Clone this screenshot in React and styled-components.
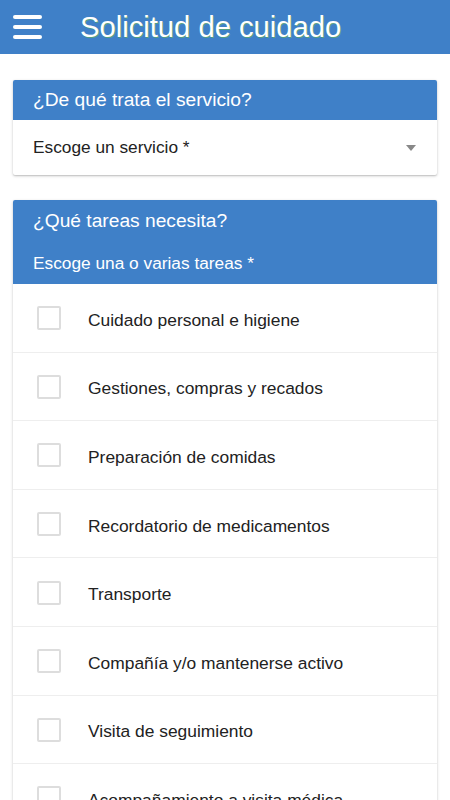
import React from "react";
import styled, { createGlobalStyle } from "styled-components";

const Global = createGlobalStyle`
  html, body { margin: 0; padding: 0; background: #fff; }
  body { font-family: "Liberation Sans", Arial, Helvetica, sans-serif; }
  * { box-sizing: border-box; }
`;

const Page = styled.div`
  width: 450px;
  min-height: 800px;
  background: #fff;
`;

const TopBar = styled.header`
  height: 54px;
  background: #3f80c8;
  display: flex;
  align-items: center;
  padding-left: 13px;
`;

const MenuButton = styled.div`
  width: 29px;
  display: flex;
  flex-direction: column;
  gap: 6px;
`;

const MenuLine = styled.span`
  display: block;
  height: 4px;
  border-radius: 2px;
  background: #fff;
`;

const Title = styled.h1`
  margin: 0 0 0 38px;
  color: #fff;
  font-size: 29.2px;
  font-weight: 400;
  text-shadow: 1px 1px 0 rgba(90, 170, 110, 0.8);
`;

const Content = styled.main`
  padding: 26px 13px 0;
  display: flex;
  flex-direction: column;
  gap: 25px;
`;

const Card = styled.section`
  background: #fff;
  border-radius: 2px;
  box-shadow: 0 1px 3px rgba(0, 0, 0, 0.22), 0 1px 1px rgba(0, 0, 0, 0.08);
  overflow: hidden;
`;

const CardHead = styled.div`
  background: #3f80c8;
  color: #fff;
  padding: ${(p) => (p.$tall ? "9px 20px 0" : "0 20px")};
  height: ${(p) => (p.$tall ? "84px" : "40px")};
  display: flex;
  flex-direction: column;
  justify-content: ${(p) => (p.$tall ? "flex-start" : "center")};
`;

const HeadTitle = styled.div`
  font-size: 19.2px;
  line-height: 24px;
`;

const HeadSub = styled.div`
  font-size: 17.3px;
  line-height: 20px;
  margin-top: 20px;
`;

const SelectRow = styled.div`
  height: 55px;
  display: flex;
  align-items: center;
  justify-content: space-between;
  padding: 0 21px 0 20px;
  font-size: 17.3px;
  color: #222;
`;

const Caret = styled.span`
  width: 0;
  height: 0;
  border-left: 5.5px solid transparent;
  border-right: 5.5px solid transparent;
  border-top: 6px solid #888;
`;

const Item = styled.label`
  height: 68.6px;
  display: flex;
  align-items: center;
  padding-left: 24px;
  border-bottom: 1px solid #eee;
  font-size: 17.4px;
  color: #222;
`;

const ItemText = styled.span`
  padding-top: 5px;
`;

const Box = styled.span`
  width: 24px;
  height: 24px;
  border: 2px solid #ddd;
  border-radius: 2px;
  margin-right: 27px;
  margin-top: 1px;
  flex-shrink: 0;
`;

const tasks = [
  "Cuidado personal e higiene",
  "Gestiones, compras y recados",
  "Preparación de comidas",
  "Recordatorio de medicamentos",
  "Transporte",
  "Compañía y/o mantenerse activo",
  "Visita de seguimiento",
  "Acompañamiento a visita médica",
];

export default function App() {
  return (
    <Page>
      <Global />
      <TopBar>
        <MenuButton>
          <MenuLine />
          <MenuLine />
          <MenuLine />
        </MenuButton>
        <Title>Solicitud de cuidado</Title>
      </TopBar>
      <Content>
        <Card>
          <CardHead>
            <HeadTitle>¿De qué trata el servicio?</HeadTitle>
          </CardHead>
          <SelectRow>
            <span>Escoge un servicio *</span>
            <Caret />
          </SelectRow>
        </Card>
        <Card>
          <CardHead $tall>
            <HeadTitle>¿Qué tareas necesita?</HeadTitle>
            <HeadSub>Escoge una o varias tareas *</HeadSub>
          </CardHead>
          {tasks.map((t) => (
            <Item key={t}>
              <Box />
              <ItemText>{t}</ItemText>
            </Item>
          ))}
        </Card>
      </Content>
    </Page>
  );
}
